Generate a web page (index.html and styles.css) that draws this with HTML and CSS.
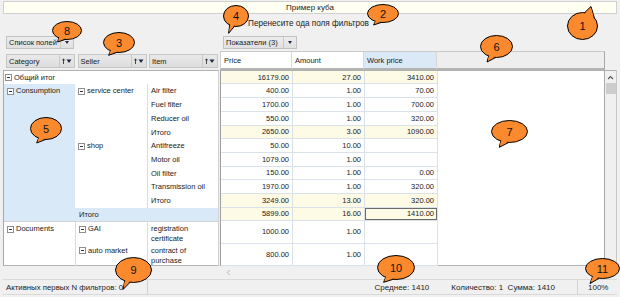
FILE: index.html
```html
<!DOCTYPE html>
<html lang="ru">
<head>
<meta charset="utf-8">
<title>Пример куба</title>
<link rel="stylesheet" href="styles.css">
</head>
<body>
<div class="title">Пример куба</div>
<div class="filter-zone"><span>Перенесите ода поля фильтров</span></div>

<div class="pivot">
  <div class="top-left">
    <div class="btn btn-list"><span class="btn-main">Список полей</span><span class="btn-dd"><i class="tri"></i></span></div>
  </div>
  <div class="top-right">
    <div class="btn btn-measures"><span class="btn-main">Показатели (3)</span><span class="btn-dd"><i class="tri"></i></span></div>
  </div>

  <div class="row-fields">
    <div class="fbtn"><span class="fbtn-main">Category</span><span class="fbtn-sort"><svg width="10" height="6" viewBox="0 0 10 6"><path d="M1.5 6V1M0.3 2.4L1.5 0.8L2.7 2.4" fill="none" stroke="#333" stroke-width="0.9"/><path d="M4.5 1.5H9.5L7 5Z" fill="#1c2a4a"/></svg></span></div>
    <div class="fbtn"><span class="fbtn-main">Seller</span><span class="fbtn-sort"><svg width="10" height="6" viewBox="0 0 10 6"><path d="M1.5 6V1M0.3 2.4L1.5 0.8L2.7 2.4" fill="none" stroke="#333" stroke-width="0.9"/><path d="M4.5 1.5H9.5L7 5Z" fill="#1c2a4a"/></svg></span></div>
    <div class="fbtn"><span class="fbtn-main">Item</span><span class="fbtn-sort"><svg width="10" height="6" viewBox="0 0 10 6"><path d="M1.5 6V1M0.3 2.4L1.5 0.8L2.7 2.4" fill="none" stroke="#333" stroke-width="0.9"/><path d="M4.5 1.5H9.5L7 5Z" fill="#1c2a4a"/></svg></span></div>
  </div>

  <div class="col-header">
    <div class="hcell">Price</div>
    <div class="hcell">Amount</div>
    <div class="hcell hsel">Work price</div>
    <div class="hrest"></div>
    <div class="hcorner"></div>
  </div>

  <div class="row-area">
    <div class="rgrid">
      <div class="rc r-all"><i class="exp"></i>Общий итог</div>
      <div class="rc r-cons"><i class="exp"></i>Consumption</div>
      <div class="rc r-svc"><i class="exp"></i>service center</div>
      <div class="rc item">Air filter</div>
      <div class="rc item">Fuel filter</div>
      <div class="rc item">Reducer oil</div>
      <div class="rc item">Итого</div>
      <div class="rc r-shop"><i class="exp"></i>shop</div>
      <div class="rc item">Antifreeze</div>
      <div class="rc item">Motor oil</div>
      <div class="rc item">Oil filter</div>
      <div class="rc item">Transmission oil</div>
      <div class="rc item">Итого</div>
      <div class="rc r-constot">Итого</div>
      <div class="rc r-doc"><i class="exp"></i>Documents</div>
      <div class="rc r-gai"><i class="exp"></i>GAI</div>
      <div class="rc r-auto"><i class="exp"></i>auto market</div>
      <div class="rc item item-doc">registration certificate</div>
      <div class="rc item">contract of purchase</div>
    </div>
  </div>

  <div class="data-area">
    <div class="data-white">
      <div class="dgrid">
        <div class="dc t">16179.00</div><div class="dc t">27.00</div><div class="dc t">3410.00</div>
        <div class="dc">400.00</div><div class="dc">1.00</div><div class="dc">70.00</div>
        <div class="dc">1700.00</div><div class="dc">1.00</div><div class="dc">700.00</div>
        <div class="dc">550.00</div><div class="dc">1.00</div><div class="dc">320.00</div>
        <div class="dc t">2650.00</div><div class="dc t">3.00</div><div class="dc t">1090.00</div>
        <div class="dc">50.00</div><div class="dc">10.00</div><div class="dc"></div>
        <div class="dc">1079.00</div><div class="dc">1.00</div><div class="dc"></div>
        <div class="dc">150.00</div><div class="dc">1.00</div><div class="dc">0.00</div>
        <div class="dc">1970.00</div><div class="dc">1.00</div><div class="dc">320.00</div>
        <div class="dc t">3249.00</div><div class="dc t">13.00</div><div class="dc t">320.00</div>
        <div class="dc t">5899.00</div><div class="dc t">16.00</div><div class="dc t active">1410.00</div>
        <div class="dc">1000.00</div><div class="dc">1.00</div><div class="dc"></div>
        <div class="dc">800.00</div><div class="dc">1.00</div><div class="dc"></div>
      </div>
    </div>
    <div class="vscroll">
      <svg class="up" width="7" height="5" viewBox="0 0 7 5"><path d="M1 4L3.5 1.5L6 4" fill="none" stroke="#555" stroke-width="1.1"/></svg>
      <div class="thumb"></div>
    </div>
  </div>

  <div class="hscroll">
    <div class="hs-left"></div>
    <div class="hs-right"><svg width="5" height="7" viewBox="0 0 5 7"><path d="M3.8 1L1.3 3.5L3.8 6" fill="none" stroke="#b4b4b4" stroke-width="1"/></svg></div>
  </div>
</div>

<div class="status">
  <div class="sp sp1">Активных первых N фильтров: 0</div>
  <div class="sp sp2"><span>Среднее: 1410</span><span>Количество: 1&nbsp; Сумма: 1410</span></div>
  <div class="sp sp3">100%</div>
</div>

<div class="bubble b1"><svg width="31" height="28" viewBox="0 0 31 28"><path d="M17 1.2L24 -5.5L27.5 6.5Z" class="tail"/><ellipse cx="15.5" cy="14" rx="15" ry="13.5" class="ell"/><path d="M17.6 1.8L24 -4.2L26.6 6Z" class="tailfill"/></svg><span>1</span></div>
<div class="bubble b2"><svg width="32" height="19" viewBox="0 0 32 19"><path d="M9 16L6.6 21L15 18.2Z" class="tail"/><ellipse cx="16" cy="9.5" rx="15.5" ry="9" class="ell"/><path d="M9.4 15.5L7.4 19.6L14.4 17.7Z" class="tailfill"/></svg><span>2</span></div>
<div class="bubble b3"><svg width="32" height="21" viewBox="0 0 32 21"><path d="M8 17.5L5.6 23.3L15 20Z" class="tail"/><ellipse cx="16" cy="10.5" rx="15.5" ry="10" class="ell"/><path d="M8.4 17L6.4 21.8L14.4 19.5Z" class="tailfill"/></svg><span>3</span></div>
<div class="bubble b4"><svg width="26" height="22" viewBox="0 0 26 22"><path d="M7 18L5.6 28.3L12 20.6Z" class="tail"/><ellipse cx="13" cy="11" rx="12.5" ry="10.5" class="ell"/><path d="M7.4 17.5L6.2 26.5L11.4 20.1Z" class="tailfill"/></svg><span>4</span></div>
<div class="bubble b5"><svg width="32" height="23" viewBox="0 0 32 23"><path d="M9 20L6.7 26L16 22.3Z" class="tail"/><ellipse cx="16" cy="11.5" rx="15.5" ry="11" class="ell"/><path d="M9.4 19.5L7.5 24.5L15.4 21.8Z" class="tailfill"/></svg><span>5</span></div>
<div class="bubble b6"><svg width="33" height="23" viewBox="0 0 33 23"><path d="M9 20L7 27L16 22.3Z" class="tail"/><ellipse cx="16.5" cy="11.5" rx="16" ry="11" class="ell"/><path d="M9.4 19.5L7.8 25.4L15.4 21.8Z" class="tailfill"/></svg><span>6</span></div>
<div class="bubble b7"><svg width="37" height="23" viewBox="0 0 37 23"><path d="M10 20L8.3 27.3L18 22.3Z" class="tail"/><ellipse cx="18.5" cy="11.5" rx="18" ry="11" class="ell"/><path d="M10.4 19.5L9 25.7L17.4 21.8Z" class="tailfill"/></svg><span>7</span></div>
<div class="bubble b8"><svg width="30" height="19" viewBox="0 0 30 19"><path d="M7 16L5.6 21L14 18.2Z" class="tail"/><ellipse cx="15" cy="9.5" rx="14.5" ry="9" class="ell"/><path d="M7.4 15.5L6.3 19.6L13.4 17.7Z" class="tailfill"/></svg><span>8</span></div>
<div class="bubble b9"><svg width="37" height="26" viewBox="0 0 37 26"><path d="M10 22.5L8 32.5L15.5 24.8Z" class="tail"/><ellipse cx="18.5" cy="13" rx="18" ry="12.5" class="ell"/><path d="M10.4 22L8.6 30.6L14.9 24.3Z" class="tailfill"/></svg><span>9</span></div>
<div class="bubble b10"><svg width="38" height="25" viewBox="0 0 38 25"><path d="M9 21.5L6.6 27.3L17 24Z" class="tail"/><ellipse cx="19" cy="12.5" rx="18.5" ry="12" class="ell"/><path d="M9.4 21L7.4 25.8L16.4 23.5Z" class="tailfill"/></svg><span>10</span></div>
<div class="bubble b11"><svg width="35" height="21" viewBox="0 0 35 21"><path d="M8 17.5L5 25.6L14 20.3Z" class="tail"/><ellipse cx="17.5" cy="10.5" rx="17" ry="10" class="ell"/><path d="M8.4 17L5.8 23.8L13.4 19.8Z" class="tailfill"/></svg><span>11</span></div>
</body>
</html>
```
FILE: styles.css
```css
* { box-sizing: border-box; }

html, body {
  margin: 0;
  padding: 0;
}

body {
  width: 620px;
  height: 297px;
  overflow: hidden;
  position: relative;
  background: #f0f0f0;
  font-family: "Liberation Sans", Arial, sans-serif;
  font-size: 7.5px;
  color: #1a1a1a;
}

.title {
  margin: 1px 3px 0;
  height: 13px;
  border: 1px solid #d0d0d0;
  background: #fffff2;
  display: flex;
  align-items: center;
  justify-content: center;
  font-size: 8px;
}

.filter-zone {
  height: 19px;
  display: flex;
  align-items: center;
  padding-left: 248px;
  font-size: 8.2px;
}

/* ---------- pivot ---------- */
.pivot {
  margin: 0 3px;
  display: grid;
  grid-template-columns: 217px 1fr;
  grid-template-rows: 18px 18.75px 196.25px 12px;
}

.top-left, .top-right {
  display: flex;
  align-items: flex-start;
  padding-top: 3px;
}
.top-left { padding-left: 3px; }
.top-right { padding-left: 3px; }

.btn {
  display: flex;
  height: 13px;
  border: 1px solid #c2c2c2;
  background: linear-gradient(#ededed, #e0e0e0);
}
.btn-main {
  display: flex;
  align-items: center;
  padding-left: 2px;
}
.btn-list .btn-main { width: 53px; }
.btn-measures .btn-main { width: 59px; }
.btn-dd {
  width: 13px;
  border-left: 1px solid #c8c8c8;
  display: flex;
  align-items: center;
  justify-content: center;
}
.tri {
  display: block;
  width: 0;
  height: 0;
  border-left: 2.5px solid transparent;
  border-right: 2.5px solid transparent;
  border-top: 3px solid #1c2a4a;
}

.row-fields {
  display: flex;
  gap: 2.5px;
  padding: 3px 0 0 3px;
}
.fbtn {
  display: flex;
  width: 69px;
  height: 14px;
  border: 1px solid #c6c6c6;
  background: linear-gradient(#e9e9e9, #dddddd);
}
.fbtn-main {
  flex: 1;
  display: flex;
  align-items: center;
  padding-left: 2px;
}
.fbtn-sort {
  width: 15px;
  border-left: 1px solid #c9c9c9;
  display: flex;
  align-items: center;
  justify-content: center;
}

.col-header {
  display: grid;
  grid-template-columns: 72px 72px 73px 1fr 12px;
}
.hcell, .hrest {
  border-top: 1px solid #c9c9c9;
  border-bottom: 2px solid #b4b4b4;
  border-right: 1px solid #d8d8d8;
  background: #fff;
  padding: 4px 0 0 3px;
}
.hcell:first-child { border-left: 1px solid #d0d0d0; }
.hsel { background: #dbe9f7; }
.hrest {
  background: #eeeeee;
  border-right: 1px solid #a9a9a9;
}

/* ---------- row headers ---------- */
.row-area {
  border-left: 1px solid #a9a9a9;
  border-top: 1px solid #b0b0b0;
  border-bottom: 1px solid #b4b4b4;
  border-right: 1px solid #d2d2d2;
  background: #fff;
  margin-right: 1px;
}
.rgrid {
  display: grid;
  grid-template-columns: 71px 72px 1fr;
  grid-template-rows: repeat(11, 13.7px) 22.3px 22.3px;
}
.rc {
  padding: 2px 0 0 3px;
  line-height: 10px;
  display: flex;
  align-items: flex-start;
  gap: 2px;
}
.exp {
  flex: none;
  width: 7px;
  height: 7px;
  margin-top: 1.5px;
  border: 1px solid #8f8f8f;
  background: #fff;
  display: flex;
  align-items: center;
  justify-content: center;
}
.exp::after {
  content: "";
  width: 3px;
  height: 1px;
  background: #333;
}
.r-all { grid-column: 1 / 4; grid-row: 1; padding-left: 1px; }
.r-cons { grid-column: 1; grid-row: 2 / 12; background: #dae9f8; padding-left: 3px; }
.r-svc { grid-column: 2; grid-row: 2 / 6; }
.r-shop { grid-column: 2; grid-row: 6 / 11; }
.r-constot { grid-column: 2 / 4; grid-row: 11; background: #dae9f8; padding-left: 4px; }
.r-doc { grid-column: 1; grid-row: 12 / 14; border-top: 1px solid #d4d4d4; padding-left: 3px; }
.r-gai { grid-column: 2; grid-row: 12; border-top: 1px solid #d4d4d4; border-left: 1px solid #dcdcdc; }
.r-auto { grid-column: 2; grid-row: 13; border-left: 1px solid #dcdcdc; }
.item { grid-column: 3; border-left: 1px solid #dcdcdc; }
.item-doc { border-top: 1px solid #d4d4d4; }

/* ---------- data ---------- */
.data-area {
  display: flex;
  border-top: 1px solid #b0b0b0;
  border-bottom: 1px solid #b4b4b4;
  border-left: 1px solid #9f9f9f;
  border-right: 1px solid #c8c8c8;
}
.data-white {
  flex: 1;
  background: #fff;
}
.dgrid {
  width: 217px;
  display: grid;
  grid-template-columns: 72px 72px 73px;
  grid-template-rows: repeat(11, 13.7px) 22.3px 22.3px;
}
.dc {
  display: flex;
  align-items: center;
  justify-content: flex-end;
  padding-right: 3px;
  border-right: 1px solid #dbe1e8;
  border-bottom: 1px solid #dbe1e8;
  color: #222;
}
.dc.t { background: #fdfae6; }
.dc.active { box-shadow: inset 0 0 0 1px #6b6b6b; }

.vscroll {
  width: 12px;
  border-left: 1px solid #a9a9a9;
  background: #f0f0f0;
  display: flex;
  flex-direction: column;
  align-items: center;
  padding-top: 4px;
  gap: 3px;
}
.thumb {
  width: 10px;
  height: 11px;
  background: #cdcdcd;
}

.hscroll {
  grid-column: 1 / 3;
  display: grid;
  grid-template-columns: 217px 1fr;
}
.hs-right {
  display: flex;
  align-items: center;
  padding-left: 6px;
}

/* ---------- status ---------- */
.status {
  margin: 1px 3px 0;
  height: 16px;
  display: grid;
  grid-template-columns: 144px 431px 1fr;
  border-top: 1px solid #d9d9d9;
  border-bottom: 1px solid #d9d9d9;
  color: #222;
  font-size: 8px;
}
.sp {
  display: flex;
  align-items: center;
}
.sp1 { padding-left: 3px; font-size: 7.8px; }
.sp2 {
  border-left: 1px solid #d2d2d2;
  border-right: 1px solid #d2d2d2;
  justify-content: flex-end;
  gap: 22px;
  padding-right: 22px;
}
.sp3 { padding-left: 10px; }

/* ---------- callout bubbles ---------- */
.bubble {
  position: absolute;
  display: flex;
  align-items: center;
  justify-content: center;
  font-size: 11px;
  color: #111;
}
.bubble svg {
  position: absolute;
  left: 0;
  top: 0;
  overflow: visible;
}
.bubble span { position: relative; }
.ell { fill: #fb8a2e; stroke: #000; stroke-width: 1; }
.tail { fill: #fb8a2e; stroke: #000; stroke-width: 1; stroke-linejoin: round; }
.tailfill { fill: #fb8a2e; }

.b1 { left: 567px; top: 12px; width: 31px; height: 28px; }
.b2 { left: 367px; top: 4px; width: 32px; height: 19px; }
.b3 { left: 103px; top: 32px; width: 32px; height: 21px; }
.b4 { left: 223px; top: 5px; width: 26px; height: 22px; }
.b5 { left: 30px; top: 117px; width: 32px; height: 23px; }
.b6 { left: 480px; top: 35px; width: 33px; height: 23px; }
.b7 { left: 491px; top: 120px; width: 37px; height: 23px; }
.b8 { left: 52px; top: 21px; width: 30px; height: 19px; }
.b9 { left: 115px; top: 257px; width: 37px; height: 26px; }
.b10 { left: 377px; top: 255px; width: 38px; height: 25px; }
.b11 { left: 585px; top: 258px; width: 35px; height: 21px; }
```
